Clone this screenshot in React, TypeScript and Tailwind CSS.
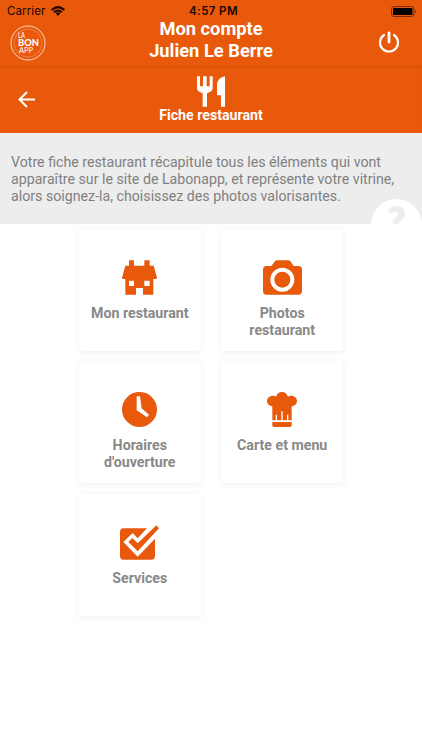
import type { ReactNode } from 'react'

interface MenuItem {
  id: string
  label: string
  icon: ReactNode
}

function HouseIcon() {
  return (
    <svg viewBox="0 0 105 105" className="h-[35px] w-[35px]" fill="currentColor" fillRule="evenodd">
      <path d="M21 1h15v16h31V1h16v16h12l10 36q0 4-4 4h-7v47H63V84H42v20H10V57H4q-4 0-4-4l10-36h11zM21 62v16h15V62zM67 62v16h16V62z" />
    </svg>
  )
}

function CameraIcon() {
  return (
    <svg viewBox="0 0 117 105" className="h-[35px] w-[39px]" fill="currentColor" fillRule="evenodd">
      <path d="M42 1h34q4 0 6 3l10 14h14q11 0 11 11v64q0 11-11 11H11Q0 104 0 93V29q0-11 11-11h14L36 4q2-3 6-3zM58 23a36 36 0 1 0 0 72a36 36 0 1 0 0-72z" />
      <circle cx="58" cy="59" r="24" />
    </svg>
  )
}

function ClockIcon() {
  return (
    <svg viewBox="0 0 105 105" className="h-[35px] w-[35px]" fill="currentColor">
      <circle cx="52.5" cy="52.5" r="52.5" />
      <path d="M44 13h10l5 36 22 19-6 8-31-21z" fill="#fff" />
    </svg>
  )
}

function ChefHatIcon() {
  return (
    <svg viewBox="0 0 90 105" className="h-[35px] w-[30px]" fill="currentColor">
      <path d="M16 85V43C4 41 0 34 0 27c0-9 8-16 18-16 4 0 6 1 9 3C31 4 37 0 45 0s14 4 18 14c3-2 5-3 9-3 10 0 18 7 18 16 0 7-4 14-16 16v42H64V68h-4v17H47V58h-4v27H30V68h-4v17z" />
      <path d="M16 90h58v10q0 5-5 5H21q-5 0-5-5z" />
    </svg>
  )
}

function CheckIcon() {
  return (
    <svg viewBox="0 0 117 105" className="h-[35px] w-[39px]" fill="currentColor">
      <path d="M11 10h70L53 40 38 24 10 51l43 44 52-54v52q0 11-11 11H11Q0 104 0 93V21Q0 10 11 10z" />
      <path d="M109 1l8 9-64 69-28-28 12-12 16 16z" />
    </svg>
  )
}

function CutleryIcon() {
  return (
    <svg viewBox="0 0 84 92" className="h-[31px] w-[28px]" fill="currentColor">
      <path d="M0 0h9v30h9V0h11v30h9V0h9v36q0 10-17 15v41H17V51Q0 46 0 36z" />
      <path d="M84 0v92H72V57H60V23Q63 4 84 0z" />
    </svg>
  )
}

function WifiIcon() {
  return (
    <svg viewBox="0 0 42 30" className="h-[10px] w-[14px]" fill="none" stroke="#1a0500" strokeWidth="6">
      <path d="M2 12Q21-5 40 12" />
      <path d="M9 19Q21 8 33 19" />
      <path d="M14 22q7-6 14 0l-7 8z" fill="#1a0500" stroke="none" />
    </svg>
  )
}

function Logo() {
  return (
    <svg viewBox="0 0 36 36" className="h-9 w-9">
      <g fill="none" stroke="#fff">
        <circle cx="18" cy="18" r="17" strokeWidth="0.9" opacity="0.85" />
        <circle cx="18" cy="18" r="14" strokeWidth="0.5" opacity="0.45" />
      </g>
      <g fill="#fff" fontFamily="Lato, sans-serif">
        <text x="8" y="12.5" fontSize="6.8" textLength="7" lengthAdjust="spacingAndGlyphs">LA</text>
        <text x="8" y="20.7" fontSize="9.2" fontWeight="900" textLength="21" lengthAdjust="spacingAndGlyphs">BON</text>
        <text x="9" y="28" fontSize="7.8" textLength="14" lengthAdjust="spacingAndGlyphs">APP</text>
      </g>
    </svg>
  )
}

const items: MenuItem[] = [
  { id: 'restaurant', label: 'Mon restaurant', icon: <HouseIcon /> },
  { id: 'photos', label: 'Photos restaurant', icon: <CameraIcon /> },
  { id: 'hours', label: "Horaires d'ouverture", icon: <ClockIcon /> },
  { id: 'menu', label: 'Carte et menu', icon: <ChefHatIcon /> },
  { id: 'services', label: 'Services', icon: <CheckIcon /> },
]

function MenuCard({ item }: { item: MenuItem }) {
  return (
    <button className="flex h-[122px] w-[122px] flex-col items-center bg-white px-2 pt-[31px] text-[#e8590c] shadow-[0_1px_6px_rgba(0,0,0,0.07)]">
      {item.icon}
      <span className="mt-[10px] text-center text-[14.2px] leading-[17px] font-bold text-[#888]">{item.label}</span>
    </button>
  )
}

export default function App() {
  return (
    <div className="h-[750px] w-full overflow-hidden bg-white font-[Roboto,sans-serif]">
      <header className="flex h-[66px] flex-col bg-[#e8590c]">
        <div className="grid h-[18px] grid-cols-3 items-center pt-[3px] pr-[5px] pl-[7px] font-[Inter,sans-serif] text-[11.5px] leading-4 text-[#1a0500]">
          <div className="flex items-center gap-[6px]">
            <span className="tracking-[0.1px]">Carrier</span>
            <WifiIcon />
          </div>
          <span className="pl-[3px] text-center font-semibold tracking-[0.4px]">4:57 PM</span>
          <svg viewBox="0 0 26 11" className="h-[11px] w-[26px] justify-self-end">
            <rect x="0.5" y="0.5" width="22.5" height="10" rx="2.5" fill="none" stroke="#7d2c05" />
            <rect x="2" y="2" width="19.5" height="7" rx="1" />
            <path d="M24 4q2 1.5 0 3z" fill="#7d2c05" />
          </svg>
        </div>
        <div className="flex flex-1 items-start justify-between pr-[22px] pl-[10px]">
          <div className="w-10 pt-[7px]">
            <Logo />
          </div>
          <h1 className="pl-[12px] text-center text-[18.3px] leading-[22px] font-bold text-white">
            Mon compte
            <br />
            Julien Le Berre
          </h1>
          <button className="flex w-10 justify-end pt-[13px]" aria-label="Déconnexion">
            <svg viewBox="0 0 22 22" className="h-[22px] w-[22px]" fill="none" stroke="#fff" strokeWidth="2.2" strokeLinecap="round">
              <path d="M6 4a9 9 0 1 0 10 0" />
              <path d="M11 2v9" strokeWidth="2.8" />
            </svg>
          </button>
        </div>
      </header>

      <div className="flex h-[67px] items-start justify-between bg-[#e8590c] px-[18px] text-white shadow-[inset_0_2px_2px_-1px_rgba(100,30,0,0.2)]">
        <button className="w-10 pt-[25px]" aria-label="Retour">
          <svg viewBox="0 0 17 17" className="h-[17px] w-[17px]" fill="none" stroke="currentColor" strokeWidth="2">
            <path d="M17 8.5H2M9 1L1.5 8.5 9 16" />
          </svg>
        </button>
        <div className="flex flex-col items-center pt-[10px]">
          <CutleryIcon />
          <h2 className="text-[14.2px] leading-4 font-bold">Fiche restaurant</h2>
        </div>
        <div className="w-10" />
      </div>

      <section className="relative h-[91px] overflow-hidden bg-[#ededed] pt-[21px] pl-[11px]">
        <p className="w-[400px] text-[14.2px] leading-[17px] text-[#808080]">
          Votre fiche restaurant récapitule tous les éléments qui vont
          <br />
          apparaître sur le site de Labonapp, et représente votre vitrine,
          <br />
          alors soignez-la, choisissez des photos valorisantes.
        </p>
        <div className="absolute top-[66px] right-0 h-[51px] w-[51px] rounded-full bg-white text-center font-[Lato,sans-serif] text-[38px] leading-[43px] font-black text-[#ededed] [-webkit-text-stroke:1.5px_#ededed]">
          ?
        </div>
      </section>

      <main className="mx-auto grid w-[264.4px] grid-cols-[122px_122px] justify-between gap-y-[10.5px] pt-[4.9px]">
        {items.map((item) => (
          <MenuCard key={item.id} item={item} />
        ))}
      </main>
    </div>
  )
}
